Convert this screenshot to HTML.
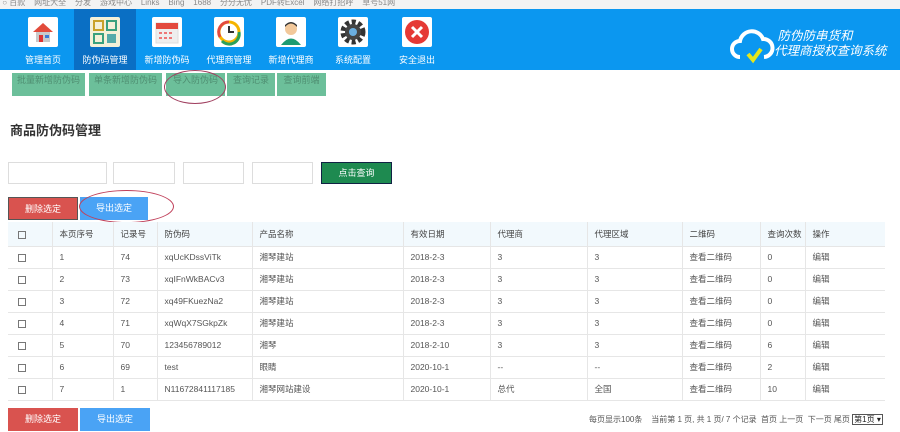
<!DOCTYPE html>
<html><head><meta charset="utf-8"><style>
*{margin:0;padding:0;box-sizing:border-box}
body{width:900px;height:432px;overflow:hidden;background:#fff;font-family:"Liberation Sans","Noto Sans CJK SC",sans-serif;font-size:9px;color:#555;position:relative}
.abs{position:absolute}
.bm{top:0;left:0;width:900px;height:9px;background:#f3f3f3;font-size:8px;color:#888;line-height:6px;white-space:nowrap;overflow:hidden}
.nav{top:9px;left:0;width:900px;height:61px;background:#0b97f0}
.it{position:absolute;top:0;width:62px;height:61px;text-align:center;color:#fff;font-size:9px}
.it .ic{position:absolute;left:16px;top:8px;width:30px;height:30px;background:#fff;border-radius:2px}
.it span{position:absolute;left:0;width:62px;top:44px}
.sub{top:73px;height:23px;background:#6cbf9a;color:#4f8f72;font-size:9px;line-height:14px;text-align:center}
.inp{top:162px;height:22px;border:1px solid #ddd;background:#fff}
.btn{height:23px;color:#fff;text-align:center;line-height:23px;font-size:9px}
table{position:absolute;left:8px;top:222px;width:877px;border-collapse:collapse}
td,th{height:22px;border-bottom:1px solid #e6e6e6;border-left:1px solid #e6e6e6;text-align:left;padding-left:7px;font-weight:normal;color:#555;font-size:8.5px}
th{background:#f2f9fd;color:#444;height:24px}
tr td:first-child,tr th:first-child{border-left:none;padding-left:10px}
.cb{display:inline-block;width:8px;height:8px;border:1px solid #777;vertical-align:middle}
</style></head><body>
<div class="abs bm">&nbsp;○ 百款 &nbsp;&nbsp; 网址大全 &nbsp;&nbsp; 分发 &nbsp;&nbsp; 游戏中心 &nbsp;&nbsp; Links &nbsp;&nbsp; Bing &nbsp;&nbsp; 1688 &nbsp;&nbsp; 分分无忧 &nbsp;&nbsp; PDF转Excel &nbsp;&nbsp; 网络打招呼 &nbsp;&nbsp; 草号51网</div>
<div class="abs nav">
<div class="abs" style="left:74px;top:0;width:62px;height:61px;background:#0a6fc4"></div>
<div class="it" style="left:12px"><div class="ic"><svg width="30" height="30"><path d="M5 15 L15 6 L25 15 Z" fill="#e24b3b"/><rect x="8" y="15" width="14" height="10" fill="#c9c9c9"/><rect x="11" y="18" width="4" height="7" fill="#d33"/><rect x="17" y="18" width="4" height="3" fill="#3a7bd5"/></svg></div><span>管理首页</span></div>
<div class="it" style="left:74px"><div class="ic" style="background:#f4f0d8"><svg width="30" height="30"><rect x="4" y="4" width="9" height="9" fill="none" stroke="#c9a22a" stroke-width="2"/><rect x="17" y="4" width="9" height="9" fill="none" stroke="#3aa17e" stroke-width="2"/><rect x="4" y="17" width="9" height="9" fill="none" stroke="#3aa17e" stroke-width="2"/><rect x="17" y="17" width="9" height="9" fill="#5aa"/></svg></div><span>防伪码管理</span></div>
<div class="it" style="left:136px"><div class="ic"><svg width="30" height="30"><rect x="4" y="6" width="22" height="20" fill="#eee" stroke="#ddd"/><rect x="4" y="6" width="22" height="6" fill="#e34a3e"/><g fill="#e77"><rect x="7" y="15" width="3" height="2"/><rect x="12" y="15" width="3" height="2"/><rect x="17" y="15" width="3" height="2"/><rect x="7" y="20" width="3" height="2"/><rect x="12" y="20" width="3" height="2"/><rect x="17" y="20" width="3" height="2"/></g></svg></div><span>新增防伪码</span></div>
<div class="it" style="left:198px"><div class="ic"><svg width="30" height="30"><circle cx="15" cy="15" r="10" fill="none" stroke="#f5b400" stroke-width="3"/><path d="M15 5 A10 10 0 0 0 6 20" fill="none" stroke="#e34a3e" stroke-width="3"/><path d="M8 24 A10 10 0 0 0 25 15" fill="none" stroke="#2aa05a" stroke-width="3"/><path d="M15 9 V15 H20" stroke="#333" stroke-width="2" fill="none"/></svg></div><span>代理商管理</span></div>
<div class="it" style="left:260px"><div class="ic"><svg width="30" height="30"><circle cx="15" cy="12" r="6" fill="#f2c89a"/><path d="M9 10 Q15 3 21 10 V8 Q15 2 9 8Z" fill="#333"/><path d="M5 28 Q15 15 25 28Z" fill="#1e9b72"/></svg></div><span>新增代理商</span></div>
<div class="it" style="left:322px"><div class="ic"><svg width="30" height="30"><circle cx="15" cy="15" r="10" fill="none" stroke="#333" stroke-width="5" stroke-dasharray="4 2.5"/><circle cx="15" cy="15" r="8" fill="#444"/><circle cx="15" cy="15" r="4" fill="#6aaee0"/></svg></div><span>系统配置</span></div>
<div class="it" style="left:386px"><div class="ic"><svg width="30" height="30"><circle cx="15" cy="15" r="12" fill="#e53935"/><path d="M10 10 L20 20 M20 10 L10 20" stroke="#fff" stroke-width="3"/></svg></div><span>安全退出</span></div>
<svg class="abs" style="left:730px;top:18px" width="45" height="40"><path d="M10 30 A8 8 0 0 1 10 14 A12 12 0 0 1 33 12 A9 9 0 0 1 34 30" fill="none" stroke="#fff" stroke-width="4"/><path d="M18 27 L23 33 L31 22" fill="none" stroke="#e6e61a" stroke-width="4"/></svg>
<div class="abs" style="left:774px;top:20px;color:#fff;font-size:12.5px;line-height:15px;font-style:italic;white-space:nowrap">&nbsp;防伪防串货和<br>代理商授权查询系统</div>
</div>
<div class="abs sub" style="left:12px;width:73px">批量新增防伪码</div>
<div class="abs sub" style="left:89px;width:73px">单条新增防伪码</div>
<div class="abs sub" style="left:166px;width:59px">导入防伪码</div>
<div class="abs sub" style="left:227px;width:48px">查询记录</div>
<div class="abs sub" style="left:277px;width:49px">查询前端</div>
<div class="abs" style="left:164px;top:70px;width:62px;height:34px;border:1px solid #a04060;border-radius:50%"></div>
<div class="abs" style="left:10px;top:120px;font-size:13px;font-weight:bold;color:#333">商品防伪码管理</div>
<div class="abs inp" style="left:8px;width:99px"></div>
<div class="abs inp" style="left:113px;width:62px"></div>
<div class="abs inp" style="left:183px;width:61px"></div>
<div class="abs inp" style="left:252px;width:61px"></div>
<div class="abs btn" style="left:321px;top:162px;width:71px;height:22px;line-height:20px;background:#1e8a50;border:1px solid #124;">点击查询</div>
<div class="abs btn" style="left:8px;top:197px;width:70px;background:#d9534f;border:1px solid #555">删除选定</div>
<div class="abs btn" style="left:80px;top:197px;width:68px;background:#4aa3f5">导出选定</div>
<div class="abs" style="left:79px;top:190px;width:95px;height:33px;border:1px solid #c0405a;border-radius:50%"></div>
<table>
<tr><th style="width:44px"><span class="cb"></span></th><th style="width:61px">本页序号</th><th style="width:44px">记录号</th><th style="width:95px">防伪码</th><th style="width:151px">产品名称</th><th style="width:87px">有效日期</th><th style="width:97px">代理商</th><th style="width:95px">代理区域</th><th style="width:78px">二维码</th><th style="width:45px">查询次数</th><th>操作</th></tr>
<tr><td><span class="cb"></span></td><td>1</td><td>74</td><td>xqUcKDssViTk</td><td>湘琴建站</td><td>2018-2-3</td><td>3</td><td>3</td><td>查看二维码</td><td>0</td><td>编辑</td></tr>
<tr><td><span class="cb"></span></td><td>2</td><td>73</td><td>xqIFnWkBACv3</td><td>湘琴建站</td><td>2018-2-3</td><td>3</td><td>3</td><td>查看二维码</td><td>0</td><td>编辑</td></tr>
<tr><td><span class="cb"></span></td><td>3</td><td>72</td><td>xq49FKuezNa2</td><td>湘琴建站</td><td>2018-2-3</td><td>3</td><td>3</td><td>查看二维码</td><td>0</td><td>编辑</td></tr>
<tr><td><span class="cb"></span></td><td>4</td><td>71</td><td>xqWqX7SGkpZk</td><td>湘琴建站</td><td>2018-2-3</td><td>3</td><td>3</td><td>查看二维码</td><td>0</td><td>编辑</td></tr>
<tr><td><span class="cb"></span></td><td>5</td><td>70</td><td>123456789012</td><td>湘琴</td><td>2018-2-10</td><td>3</td><td>3</td><td>查看二维码</td><td>6</td><td>编辑</td></tr>
<tr><td><span class="cb"></span></td><td>6</td><td>69</td><td>test</td><td>眼睛</td><td>2020-10-1</td><td>--</td><td>--</td><td>查看二维码</td><td>2</td><td>编辑</td></tr>
<tr><td><span class="cb"></span></td><td>7</td><td>1</td><td>N11672841117185</td><td>湘琴网站建设</td><td>2020-10-1</td><td>总代</td><td>全国</td><td>查看二维码</td><td>10</td><td>编辑</td></tr>
</table>
<div class="abs btn" style="left:8px;top:408px;width:70px;background:#d9534f">删除选定</div>
<div class="abs btn" style="left:80px;top:408px;width:70px;background:#4aa3f5">导出选定</div>
<div class="abs" style="left:589px;top:414px;font-size:8px;color:#555;white-space:nowrap">每页显示100条 &nbsp;&nbsp; 当前第 1 页, 共 1 页/ 7 个记录 &nbsp;首页 上一页 &nbsp;下一页 尾页 <span style="border:1px solid #555;padding:0 1px;color:#222">第1页 ▾</span></div>
</body></html>
